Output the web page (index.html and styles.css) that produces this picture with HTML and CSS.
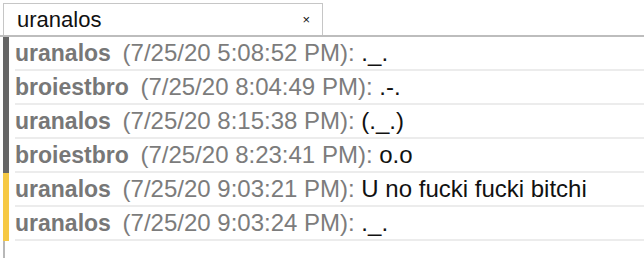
FILE: index.html
```html
<!DOCTYPE html>
<html>
<head>
<meta charset="utf-8">
<link rel="stylesheet" href="styles.css">
</head>
<body>
<div class="tabbar">
  <div class="tab">
    <span class="tab-label">uranalos</span>
    <span class="tab-close">×</span>
  </div>
</div>
<div class="log">
  <div class="row self"><div class="line"><b class="user">uranalos</b> <span class="time">(7/25/20 5:08:52 PM):</span> <span class="msg">._.</span></div></div>
  <div class="row self"><div class="line"><b class="user">broiestbro</b> <span class="time">(7/25/20 8:04:49 PM):</span> <span class="msg">.-.</span></div></div>
  <div class="row self"><div class="line"><b class="user">uranalos</b> <span class="time">(7/25/20 8:15:38 PM):</span> <span class="msg">(._.)</span></div></div>
  <div class="row self"><div class="line"><b class="user">broiestbro</b> <span class="time">(7/25/20 8:23:41 PM):</span> <span class="msg">o.o</span></div></div>
  <div class="row new"><div class="line"><b class="user">uranalos</b> <span class="time">(7/25/20 9:03:21 PM):</span> <span class="msg">U no fucki fucki bitchi</span></div></div>
  <div class="row new"><div class="line"><b class="user">uranalos</b> <span class="time">(7/25/20 9:03:24 PM):</span> <span class="msg">._.</span></div></div>
</div>
</body>
</html>
```
FILE: styles.css
```css
html, body {
  margin: 0;
  padding: 0;
  background: #fff;
  font-family: "Liberation Sans", Arial, sans-serif;
  height: 100%;
  overflow: hidden;
}
.tabbar {
  display: flex;
  padding: 3px 0 0 3px;
  border-bottom: 2px solid #bdbdbd;
}
.tab {
  box-sizing: border-box;
  width: 320px;
  height: 32px;
  border: 1px solid #c6c6c6;
  border-bottom: none;
  display: flex;
  align-items: center;
  justify-content: space-between;
  padding: 0 12px 0 13px;
}
.tab-label {
  font-size: 22px;
  color: #111;
}
.tab-close {
  font-size: 13px;
  color: #111;
  line-height: 1;
}
.log {
  margin-left: 3px;
  border-left: 2px solid #b8b8b8;
  height: 230px;
}
.row {
  margin-left: -2px;
  border-left: 6px solid #666;
  padding-left: 6px;
}
.row.new {
  border-left-color: #f6c944;
}
.line {
  height: 32px;
  line-height: 32px;
  border-bottom: 2px solid #ececec;
  font-size: 24px;
  white-space: nowrap;
}
.user {
  color: #777;
  font-weight: bold;
  font-size: 23px;
  margin-right: 5px;
}
.time {
  color: #7c7c7c;
}
.msg {
  color: #111;
}
```
